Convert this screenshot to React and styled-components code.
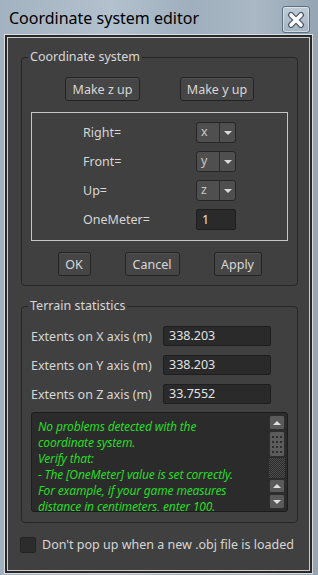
import React from 'react';
import styled, { createGlobalStyle } from 'styled-components';

const GlobalStyle = createGlobalStyle`
  html, body {
    margin: 0;
    padding: 0;
    background: #9eadbb;
  }
  * { box-sizing: border-box; }
`;

const Window = styled.div`
  width: 318px;
  height: 575px;
  display: flex;
  flex-direction: column;
  background: linear-gradient(90deg, #a3b2c0 0%, #b3c1ce 35%, #9fafbd 60%, #aab8c5 80%, #95a5b4 100%);
  font-family: "Noto Sans", "Open Sans", sans-serif;
  overflow: hidden;
`;

const TitleBar = styled.div`
  height: 34px;
  display: flex;
  align-items: flex-start;
  flex-shrink: 0;
`;

const Title = styled.div`
  margin: 7px 0 0 9px;
  font-size: 16px;
  line-height: 22px;
  color: #000;
`;

const CloseButton = styled.div`
  margin: 6px 8px 0 auto;
  width: 28px;
  height: 27px;
  border: 1px solid #5d6e7e;
  border-radius: 3px;
  background: linear-gradient(#bfccd8, #a5b4c2);
  box-shadow: inset 0 0 0 1px rgba(255, 255, 255, 0.45);
  display: flex;
  align-items: center;
  justify-content: center;
`;

const Panel = styled.div`
  flex: 1;
  margin: 0 5px 1px 4px;
  border: 1px solid #dcdcdc;
  background: #404040;
  box-shadow: inset 0 0 0 2px #2a2a2a, inset 0 0 0 3px #cdcdcd;
  padding: 14px 14px 0 16px;
  display: flex;
  flex-direction: column;
`;

const Group = styled.fieldset`
  margin: ${p => p.$top}px 0 0 0;
  padding: 12px 9px ${p => p.$bottom}px 9px;
  border: 1px solid #262626;
  border-radius: 4px;
  min-width: 0;
`;

const Legend = styled.legend`
  padding: 0 2px;
  margin-left: -3px;
  font-size: 12.5px;
  line-height: 16px;
  color: #d8d8d8;
`;

const ButtonRow = styled.div`
  display: flex;
  justify-content: center;
  gap: ${p => p.$gap}px;
  margin-top: ${p => p.$top || 0}px;
`;

const Button = styled.div`
  width: ${p => p.$w}px;
  height: 24px;
  border: 1px solid #232323;
  border-radius: 3px;
  background: #464646;
  box-shadow: inset 0 1px 0 #525252;
  color: #d8d8d8;
  font-size: 12.5px;
  display: flex;
  align-items: center;
  justify-content: center;
`;

const AxisBox = styled.div`
  margin-top: 11px;
  border: 1px solid #c4c4c4;
  padding: 9px 0 10px 51px;
  display: grid;
  grid-template-columns: 113px 40px;
  row-gap: 8px;
  align-items: center;
`;

const Label = styled.div`
  font-size: 12.5px;
  color: #d6d6d6;
  white-space: nowrap;
`;

const Combo = styled.div`
  height: 21px;
  border: 1px solid #262626;
  border-radius: 3px;
  background: #4f4f4f;
  display: flex;
`;

const ComboText = styled.div`
  flex: 1;
  padding-left: 4px;
  font-size: 12.5px;
  line-height: 18px;
  color: #c8c8c8;
  border-right: 1px solid #2c2c2c;
`;

const ComboArrow = styled.div`
  width: 15px;
  display: flex;
  align-items: center;
  justify-content: center;
  &::after {
    content: '';
    border-left: 4px solid transparent;
    border-right: 4px solid transparent;
    border-top: 4px solid #dcdcdc;
  }
`;

const Field = styled.div`
  height: ${p => p.$h || 21}px;
  border: 1px solid #1e1e1e;
  border-radius: 2px;
  background: #2a2a2a;
  padding-left: 5px;
  font-size: 12.5px;
  line-height: ${p => (p.$h || 21) - 2}px;
  color: #e2e2e2;
`;

const StatsGrid = styled.div`
  display: grid;
  grid-template-columns: 132px 108px;
  row-gap: 9px;
  align-items: center;
`;

const Report = styled.div`
  margin-top: 8px;
  height: 100px;
  border: 1px solid #1c1c1c;
  border-radius: 3px;
  background: #2b2b2b;
  display: flex;
  overflow: hidden;
`;

const ReportText = styled.div`
  flex: 1;
  padding: 6px 0 0 6px;
  font-size: 12px;
  letter-spacing: -0.15px;
  line-height: 16px;
  font-style: italic;
  color: #26dc26;
  white-space: nowrap;
  overflow: hidden;
`;

const ScrollBar = styled.div`
  width: 16px;
  margin: 2px 2px 2px 0;
  display: flex;
  flex-direction: column;
  gap: 1px;
`;

const ScrollBtn = styled.div`
  height: ${p => p.$h}px;
  border: 1px solid #2e2e2e;
  border-radius: 2px;
  background: #5a5a5a;
  display: flex;
  align-items: center;
  justify-content: center;
  &::after {
    content: '';
    border-left: 4px solid transparent;
    border-right: 4px solid transparent;
    ${p => p.$down ? 'border-top: 4px solid #e0e0e0;' : 'border-bottom: 4px solid #e0e0e0;'}
  }
`;

const Thumb = styled.div`
  height: 26px;
  border: 1px solid #2e2e2e;
  border-radius: 2px;
  background: #5c5c5c;
  display: grid;
  grid-template-columns: repeat(3, 2px);
  grid-auto-rows: 2px;
  gap: 3px 2px;
  justify-content: center;
  align-content: center;
`;

const Dot = styled.span`
  background: #2e2e2e;
`;

const Track = styled.div`
  flex: 1;
  background-image: repeating-conic-gradient(#4e4e4e 0 25%, #2a2a2a 0 50%);
  background-size: 2px 2px;
`;

const CheckRow = styled.div`
  margin-top: 13px;
  margin-left: -1px;
  display: flex;
  align-items: center;
  gap: 6px;
`;

const CheckBox = styled.div`
  width: 16px;
  height: 16px;
  border: 1px solid #222;
  border-radius: 2px;
  background: #2c2c2c;
`;

const axes = [
  ['Right=', 'x'],
  ['Front=', 'y'],
  ['Up=', 'z'],
];

const stats = [
  ['Extents on X axis (m)', '338.203'],
  ['Extents on Y axis (m)', '338.203'],
  ['Extents on Z axis (m)', '33.7552'],
];

const App = () => {
  return (
    <Window>
      <GlobalStyle />
      <TitleBar>
        <Title>Coordinate system editor</Title>
        <CloseButton>
          <svg width="18" height="16" viewBox="0 0 18 16">
            <path d="M4 3 L14 13 M14 3 L4 13" stroke="#4a5866" strokeWidth="6" strokeLinecap="round" />
            <path d="M4 3 L14 13 M14 3 L4 13" stroke="#ffffff" strokeWidth="3.6" strokeLinecap="round" />
          </svg>
        </CloseButton>
      </TitleBar>
      <Panel>
        <Group $top={0} $bottom={9}>
          <Legend>Coordinate system</Legend>
          <ButtonRow $gap={40}>
            <Button $w={75}>Make z up</Button>
            <Button $w={74}>Make y up</Button>
          </ButtonRow>
          <AxisBox>
            {axes.map(([label, val]) => (
              <React.Fragment key={label}>
                <Label>{label}</Label>
                <Combo>
                  <ComboText>{val}</ComboText>
                  <ComboArrow />
                </Combo>
              </React.Fragment>
            ))}
            <Label>OneMeter=</Label>
            <Field>1</Field>
          </AxisBox>
          <ButtonRow $gap={34} $top={11}>
            <Button $w={33}>OK</Button>
            <Button $w={55}>Cancel</Button>
            <Button $w={48}>Apply</Button>
          </ButtonRow>
        </Group>

        <Group $top={12} $bottom={10}>
          <Legend>Terrain statistics</Legend>
          <StatsGrid>
            {stats.map(([label, val]) => (
              <React.Fragment key={label}>
                <Label>{label}</Label>
                <Field $h={20}>{val}</Field>
              </React.Fragment>
            ))}
          </StatsGrid>
          <Report>
            <ReportText>
              No problems detected with the<br />
              coordinate system.<br />
              Verify that:<br />
              - The [OneMeter] value is set correctly.<br />
              For example, if your game measures<br />
              distance in centimeters, enter 100.
            </ReportText>
            <ScrollBar>
              <ScrollBtn $h={15} />
              <Thumb>
                {Array.from({ length: 12 }).map((_, i) => <Dot key={i} />)}
              </Thumb>
              <Track />
              <ScrollBtn $h={14} />
              <ScrollBtn $h={15} $down />
            </ScrollBar>
          </Report>
        </Group>

        <CheckRow>
          <CheckBox />
          <Label>Don't pop up when a new .obj file is loaded</Label>
        </CheckRow>
      </Panel>
    </Window>
  );
};

export default App;
